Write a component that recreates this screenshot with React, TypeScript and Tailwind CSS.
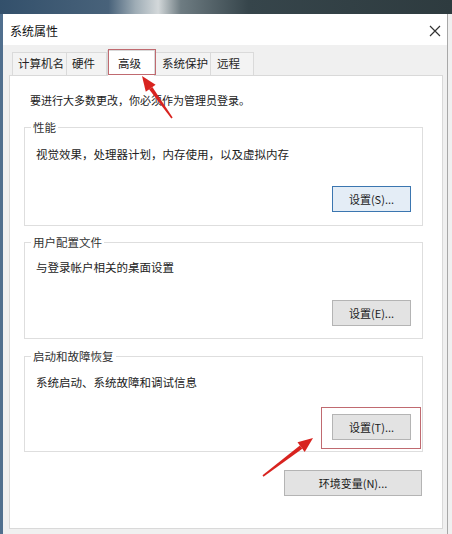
import React from 'react';

const font = { fontFamily: '"Noto Sans CJK SC", "Noto Sans", sans-serif' };

type Tab = { label: string; width: string; pad: string; active?: boolean };

const tabs: Tab[] = [
  { label: '计算机名', width: 'w-[55px]', pad: 'pl-[5px]' },
  { label: '硬件', width: 'w-[41px]', pad: 'pl-[5px]' },
  { label: '高级', width: 'w-[48px]', pad: 'pl-[10px]', active: true },
  { label: '系统保护', width: 'w-[57px]', pad: 'pl-[7px]' },
  { label: '远程', width: 'w-[44px]', pad: 'pl-[6px]' },
];

function DlgButton({ label, focused, wide }: { label: string; focused?: boolean; wide?: boolean }) {
  return (
    <button
      className={`${wide ? 'w-[138px]' : 'w-[79px]'} h-[26px] self-end shrink-0 text-[11px] text-[#1a1a1a] border ${
        focused ? 'border-[#3b76b0] bg-[#e4edf6]' : 'border-[#b4b4b4] bg-[#e3e3e3]'
      }`}
    >
      {label}
    </button>
  );
}

function Group({
  title,
  desc,
  button,
  focused,
  cls,
}: {
  title: string;
  desc: string;
  button: string;
  focused?: boolean;
  cls: string;
}) {
  return (
    <fieldset className={`border border-[#dedede] px-[11px] ${cls}`}>
      <legend className="ml-[-5px] px-[2px] text-[11.5px] leading-[16px] text-[#333]">{title}</legend>
      <div className="flex flex-col h-full">
        <p className="desc text-[11.5px] leading-[16px] text-[#222]">{desc}</p>
        <div className="mt-auto flex justify-end">
          <DlgButton label={button} focused={focused} />
        </div>
      </div>
    </fieldset>
  );
}

export default function App() {
  return (
    <div className="relative w-[452px] h-[534px] overflow-hidden bg-[#f0f0f0]" style={font}>
      {/* desktop strip */}
      <div className="h-[14px] bg-[linear-gradient(90deg,#33506b_0%,#48627a_24%,#9fadb6_30%,#d3d8da_35%,#6e7c82_40%,#36454b_55%,#2e3b3f_100%)]" />

      {/* window */}
      <div className="w-[448px] h-[520px] flex flex-col border-l-[3px] border-l-[#506f8e] border-r border-r-[#a8a8a8]">
        {/* title bar */}
        <div className="h-[31px] bg-white flex items-center justify-between pl-[7px] pr-[4px] pt-[3px]">
          <span className="text-[12px] text-[#111]">系统属性</span>
          <svg width="12" height="12" viewBox="0 0 12 12" className="mr-[2px]">
            <path d="M1 1 L11 11 M11 1 L1 11" stroke="#333" strokeWidth="1.2" />
          </svg>
        </div>

        {/* body */}
        <div className="flex-1 flex flex-col pl-[6px] pr-[4px]">
          {/* tabs */}
          <div className="h-[30px] flex items-end pl-[3px]">
            {tabs.map((t) =>
              t.active ? (
                <div
                  key={t.label}
                  className={`${t.width} ${t.pad} h-[26px] -mb-px bg-white border border-b-0 border-[#d9d9d9] relative z-10 flex items-center text-[11.5px] text-[#222]`}
                >
                  {t.label}
                </div>
              ) : (
                <div
                  key={t.label}
                  className={`${t.width} ${t.pad} h-[23px] bg-[#f3f3f3] border border-b-0 border-[#dadada] -ml-px first:ml-0 flex items-center text-[11.5px] text-[#222]`}
                >
                  {t.label}
                </div>
              )
            )}
          </div>

          {/* panel */}
          <div className="h-[454px] bg-white border border-[#d9d9d9] flex flex-col pl-[14px] pr-[19px] pt-[16px]">
            <p className="ml-[6px] text-[11px] leading-[16px] text-[#222]">要进行大多数更改，你必须作为管理员登录。</p>

            <div className="mt-[11px]">
              <Group
                title="性能"
                desc="视觉效果，处理器计划，内存使用，以及虚拟内存"
                button="设置(S)..."
                focused
                cls="h-[107px] pb-[13px] [&_.desc]:mt-[11px]"
              />
            </div>
            <div className="mt-[8px]">
              <Group
                title="用户配置文件"
                desc="与登录帐户相关的桌面设置"
                button="设置(E)..."
                cls="h-[105px] pb-[12px] [&_.desc]:mt-[9px]"
              />
            </div>
            <div className="mt-[9px]">
              <Group
                title="启动和故障恢复"
                desc="系统启动、系统故障和调试信息"
                button="设置(T)..."
                cls="h-[104px] pb-[11px] [&_.desc]:mt-[10px]"
              />
            </div>

            <div className="mt-[18px] flex justify-end pr-[1px]">
              <DlgButton label="环境变量(N)..." wide />
            </div>
          </div>
        </div>
      </div>

      {/* annotations */}
      <div className="absolute left-[108px] top-[49px] w-[48px] h-[26px] border-[1.5px] border-[#c06a70] z-20 pointer-events-none" />
      <div className="absolute left-[321px] top-[407px] w-[100px] h-[42px] border-[1.5px] border-[#c06a70] pointer-events-none" />
      <svg className="absolute left-0 top-0 pointer-events-none z-30" width="452" height="534" viewBox="0 0 452 534">
        <polygon points="172.65,117.54 171.35,118.46 149.07,89.36 152.33,87.04" fill="#d8231f" />
        <polygon points="142,76 155.6,84.7 145.8,91.7" fill="#d8231f" />
        <polygon points="263.48,476.64 262.52,475.36 299.89,445.51 302.31,448.69" fill="#d8231f" />
        <polygon points="313,438 304.7,451.9 297.5,442.3" fill="#d8231f" />
      </svg>
    </div>
  );
}
